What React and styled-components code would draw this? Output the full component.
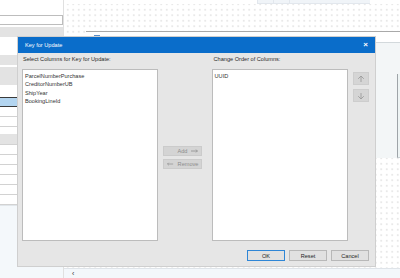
import React from 'react';
import styled, { createGlobalStyle } from 'styled-components';

const Global = createGlobalStyle`
  html, body { margin: 0; padding: 0; background: #fff; }
  body { font-family: "Liberation Sans", Arial, sans-serif; }
`;

const Screen = styled.div`
  position: relative;
  width: 400px;
  height: 278px;
  overflow: hidden;
  display: flex;
  background: #fff;
`;

const Sidebar = styled.div`
  width: 63px;
  display: flex;
  flex-direction: column;
  border-right: 1px solid #e0e0e0;
  background: #fff;
`;

const SideTop = styled.div`
  height: 15px;
  flex: none;
`;

const SideInput = styled.div`
  height: 8px;
  flex: none;
  border: 1px solid #bdbdbd;
  border-left: none;
  background: #fff;
  margin-bottom: 2px;
`;

const SideRow = styled.div`
  height: ${p => p.h || 9}px;
  flex: none;
  background: ${p => (p.kind === 'grey' ? '#e3e3e3' : p.kind === 'sel' ? '#b3d5f0' : '#fff')};
  border-bottom: 1px solid ${p => (p.kind === 'sel' ? '#3a3a3a' : p.line ? '#d2d2d2' : 'transparent')};
  border-top: ${p => (p.kind === 'sel' ? '1px solid #3a3a3a' : 'none')};
`;

const SideFill = styled.div`
  flex: 1;
  background: #f4f8fb;
  border-top: 1px solid #e1e6ea;
`;

const Canvas = styled.div`
  flex: 1;
  display: flex;
  flex-direction: column;
`;

const CanvasTop = styled.div`
  height: 4px;
  flex: none;
  display: flex;
  justify-content: flex-end;
  padding-right: 30px;
`;

const TopTab = styled.div`
  width: ${p => p.w}px;
  background: #f0f4f8;
  border-left: 1px solid #e2e7ed;
  border-bottom: 1px solid #e2e7ed;
`;

const Dots = styled.div`
  flex: 1;
  position: relative;
  background-color: #fff;
  background-image: radial-gradient(circle, #d3d3d3 0.5px, transparent 0.8px);
  background-size: 5.5px 5.5px;
  background-position: 1px 3px;
`;

const Node = styled.div`
  position: absolute;
  left: 22px;
  top: 27px;
  width: 330px;
  height: 126px;
  border-top: 1px solid #a9a9a9;
  background: #f3f6f7;
  display: flex;
  flex-direction: column;
`;

const NodeHead = styled.div`
  height: 10px;
  background: #fff;
  border-bottom: 1px solid #d3d9dc;
  display: flex;
  align-items: center;
  padding-left: 8px;
`;

const NodeIcon = styled.div`
  width: 6px;
  height: 5px;
  background: #5b8fc9;
`;

const NodeBody = styled.div`
  flex: 1;
  margin-left: 311px;
  margin-top: 31px;
  border-left: 1px solid #9ea4a8;
  border-bottom: 1px solid #c9d0d3;
  background: #eef4f4;
`;

const Footer = styled.div`
  height: 9px;
  flex: none;
  background: #f3f7fb;
  border-top: 1px solid #dfe4e9;
  display: flex;
  align-items: center;
  font-size: 7px;
  color: #333;
  padding-left: 8px;
`;

const Dialog = styled.div`
  position: absolute;
  left: 18px;
  top: 37px;
  width: 357px;
  height: 229px;
  background: #e6e6e6;
  box-shadow: 0 0 0 1px #cfcfcf;
  display: flex;
  flex-direction: column;
  color: #222;
  font-size: 5.6px;
`;

const TitleBar = styled.div`
  height: 16px;
  flex: none;
  background: #0a6dca;
  color: #fff;
  display: flex;
  align-items: center;
  justify-content: space-between;
  padding: 0 7px 0 7px;
`;

const Close = styled.span`
  font-size: 8px;
  font-weight: bold;
  line-height: 1;
`;

const Body = styled.div`
  flex: 1;
  display: flex;
  flex-direction: column;
  padding: 2px 6px 5px 4px;
`;

const Columns = styled.div`
  display: flex;
  height: 186px;
`;

const Column = styled.div`
  width: 139px;
  display: flex;
  flex-direction: column;
`;

const Label = styled.div`
  height: 8px;
  line-height: 8px;
  padding-left: ${p => p.indent || 1}px;
  margin-bottom: 6px;
  color: #2a2a2a;
`;

const ListBox = styled.div`
  flex: 1;
  background: #fff;
  border: 1px solid #bcbcbc;
  padding: 2px 2px;
`;

const Item = styled.div`
  height: 8.3px;
  line-height: 8.3px;
  color: #333;
`;

const Middle = styled.div`
  width: 49px;
  display: flex;
  flex-direction: column;
  gap: 3px;
  padding: 91px 0 0 5px;
`;

const MoveButton = styled.div`
  width: 39px;
  height: 10px;
  background: #d4d4d4;
  border: 1px solid #cbcbcb;
  box-sizing: border-box;
  display: flex;
  align-items: center;
  justify-content: ${p => (p.left ? 'space-between' : 'flex-end')};
  gap: 4px;
  padding: 0 3px;
  color: #8c8c8c;
`;

const Side = styled.div`
  display: flex;
  flex-direction: column;
  gap: 4px;
  padding: 17px 0 0 5px;
`;

const IconButton = styled.div`
  width: 16px;
  height: 13px;
  box-sizing: border-box;
  background: #d5d5d5;
  border: 1px solid #cdcdcd;
  display: flex;
  align-items: center;
  justify-content: center;
`;

const Buttons = styled.div`
  display: flex;
  justify-content: flex-end;
  gap: 4px;
  margin-top: 9px;
`;

const DlgButton = styled.div`
  width: 38px;
  height: 11px;
  box-sizing: border-box;
  background: #e1e1e1;
  border: 1px solid ${p => (p.primary ? '#2f86d6' : '#b8b8b8')};
  display: flex;
  align-items: center;
  justify-content: center;
  color: #1e1e1e;
`;

const ArrowIcon = ({ down }) => (
  <svg width="8" height="8" viewBox="0 0 8 8" fill="none" stroke="#9c9c9c" strokeWidth="0.9">
    {down ? (
      <>
        <path d="M4 1 V7" />
        <path d="M1.2 4.2 L4 7 L6.8 4.2" />
      </>
    ) : (
      <>
        <path d="M4 7 V1" />
        <path d="M1.2 3.8 L4 1 L6.8 3.8" />
      </>
    )}
  </svg>
);

const SideArrow = ({ left }) => (
  <svg width="7" height="4" viewBox="0 0 7 4" fill="none" stroke="#8e8e8e" strokeWidth="0.8">
    {left ? (
      <path d="M7 2 H0.6 M2 0.6 L0.6 2 L2 3.4" />
    ) : (
      <path d="M0 2 H6.4 M5 0.6 L6.4 2 L5 3.4" />
    )}
  </svg>
);

const sideRows = [
  { h: 8 }, { h: 9, kind: 'grey' }, { h: 1 }, { h: 8, kind: 'grey' },
  { h: 8, kind: 'grey' }, { h: 11 }, { h: 8, kind: 'sel' }, { h: 9, line: true },
  { h: 9, line: true }, { h: 6 }, { h: 10, kind: 'grey', line: true },
  { h: 9, line: true }, { h: 9, line: true }, { h: 9, line: true },
  { h: 9, line: true }, { h: 9, line: true }, { h: 9, line: true },
];

const columns = ['ParcelNumberPurchase', 'CreditorNumberUB', 'ShipYear', 'BookingLineId'];

export default function App() {
  return (
    <>
      <Global />
      <Screen>
        <Sidebar>
          <SideTop />
          <SideInput />
          <SideRow h={9} kind="grey" />
          <SideRow h={8} />
          {sideRows.map((r, i) => (
            <SideRow key={i} h={r.h} kind={r.kind} line={r.line} />
          ))}
          <SideFill />
        </Sidebar>
        <Canvas>
          <CanvasTop>
            <TopTab w={15} />
            <TopTab w={15} />
            <TopTab w={80} />
          </CanvasTop>
          <Dots>
            <Node>
              <NodeHead>
                <NodeIcon />
              </NodeHead>
              <NodeBody />
            </Node>
          </Dots>
          <Footer>‹</Footer>
        </Canvas>

        <Dialog>
          <TitleBar>
            <span>Key for Update</span>
            <Close>×</Close>
          </TitleBar>
          <Body>
            <Columns>
              <Column>
                <Label>Select Columns for Key for Update:</Label>
                <ListBox>
                  {columns.map(c => (
                    <Item key={c}>{c}</Item>
                  ))}
                </ListBox>
              </Column>
              <Middle>
                <MoveButton>
                  <span>Add</span>
                  <SideArrow />
                </MoveButton>
                <MoveButton left>
                  <SideArrow left />
                  <span>Remove</span>
                </MoveButton>
              </Middle>
              <Column>
                <Label indent={2}>Change Order of Columns:</Label>
                <ListBox>
                  <Item>UUID</Item>
                </ListBox>
              </Column>
              <Side>
                <IconButton><ArrowIcon /></IconButton>
                <IconButton><ArrowIcon down /></IconButton>
              </Side>
            </Columns>
            <Buttons>
              <DlgButton primary>OK</DlgButton>
              <DlgButton>Reset</DlgButton>
              <DlgButton>Cancel</DlgButton>
            </Buttons>
          </Body>
        </Dialog>
      </Screen>
    </>
  );
}
